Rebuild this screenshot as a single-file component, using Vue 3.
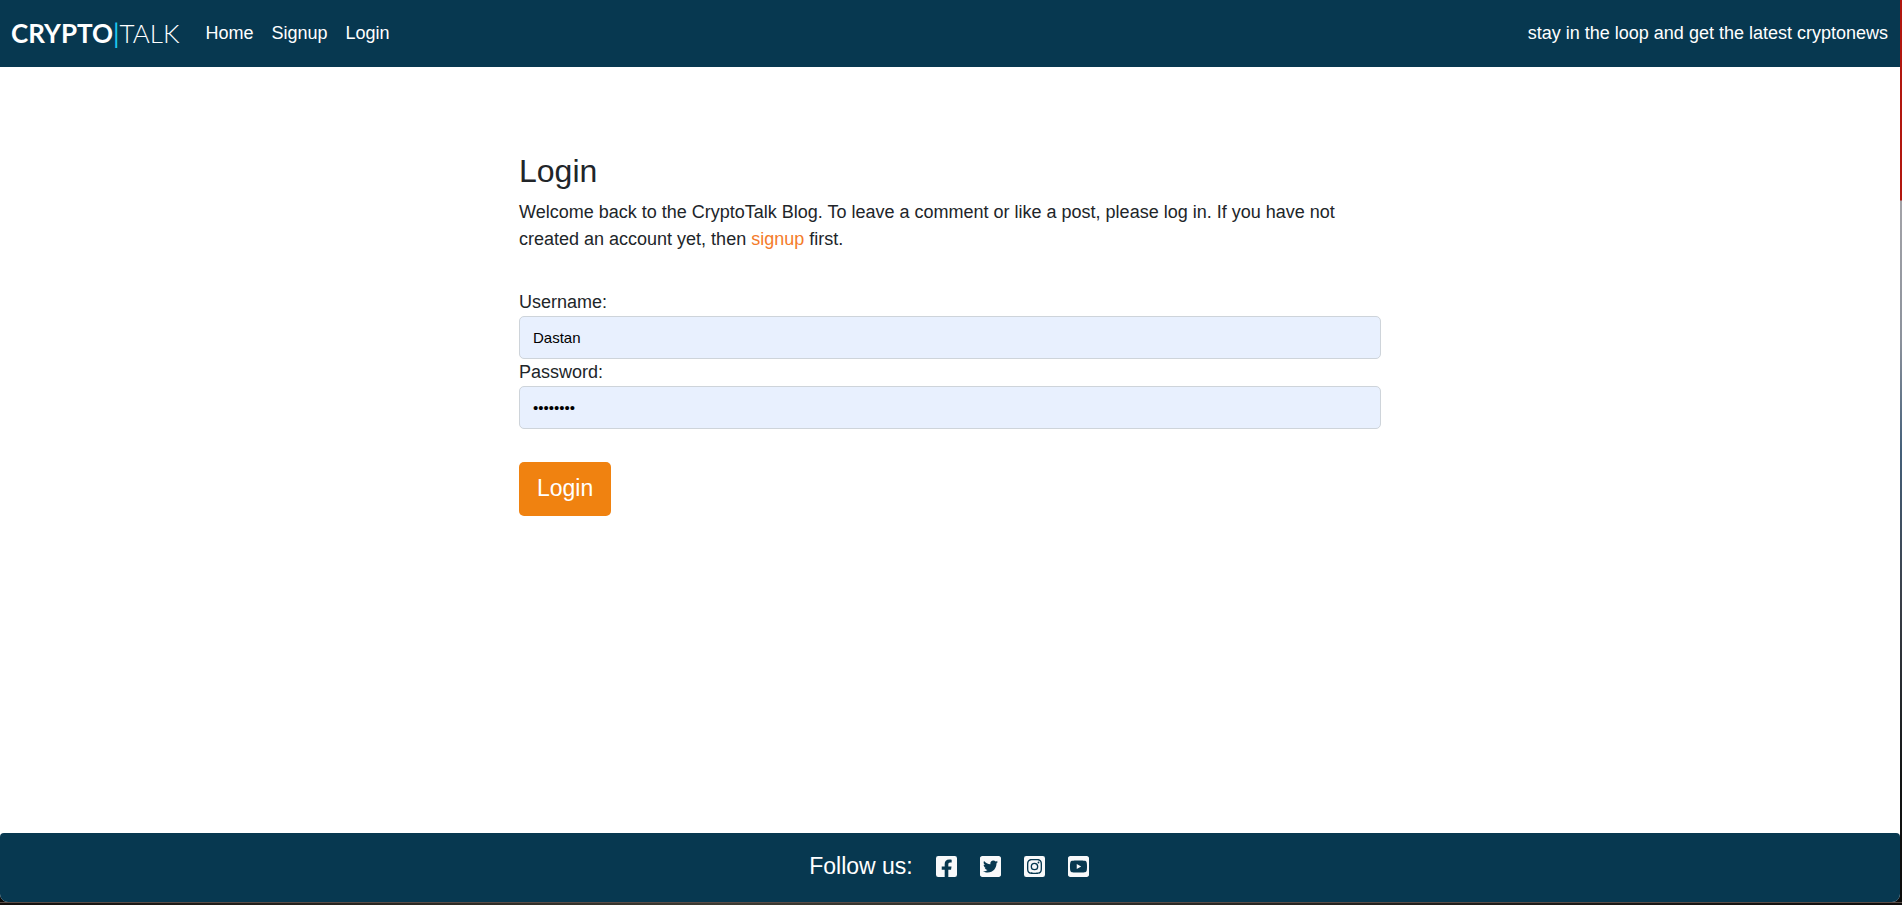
<script setup>
import { ref } from 'vue'

const username = ref('Dastan')
const password = ref('password')
const socials = [
  { name: 'Facebook', d: 'M400 32H48A48 48 0 0 0 0 80v352a48 48 0 0 0 48 48h137.25V327.69h-63V256h63v-54.64c0-62.15 37-96.48 93.67-96.48 27.14 0 55.52 4.84 55.52 4.84v61h-31.27c-30.81 0-40.42 19.12-40.42 38.73V256h68.78l-11 71.69h-57.78V480H400a48 48 0 0 0 48-48V80a48 48 0 0 0-48-48z' },
  { name: 'Twitter', d: 'M400 32H48C21.5 32 0 53.5 0 80v352c0 26.5 21.5 48 48 48h352c26.5 0 48-21.5 48-48V80c0-26.5-21.5-48-48-48zm-48.9 158.8c.2 2.8.2 5.7.2 8.5 0 86.7-66 186.6-186.6 186.6-37.2 0-71.7-10.8-100.7-29.4 5.3.6 10.4.8 15.8.8 30.7 0 58.9-10.4 81.4-28-28.8-.6-53-19.5-61.3-45.5 10.1 1.5 19.2 1.5 29.6-1.2-30-6.1-52.5-32.5-52.5-64.4v-.8c8.7 4.9 18.9 7.9 29.6 8.3a65.447 65.447 0 0 1-29.2-54.6c0-12.2 3.2-23.4 8.9-33.1 32.3 39.8 80.8 65.8 135.2 68.6-9.3-44.5 24-80.6 64-80.6 18.9 0 35.9 7.9 47.9 20.7 14.8-2.8 29-8.3 41.6-15.8-4.9 15.2-15.2 28-28.8 36.1 13.2-1.4 26-5.1 37.8-10.2-8.9 13.1-20.1 24.7-32.9 34z' },
  { name: 'Instagram', d: 'M224 202.66A53.34 53.34 0 1 0 277.36 256 53.38 53.38 0 0 0 224 202.66zm124.71-41a54 54 0 0 0-30.41-30.41c-21-8.29-71-6.43-94.3-6.43s-73.25-1.93-94.31 6.43a54 54 0 0 0-30.41 30.41c-8.28 21-6.43 71.05-6.43 94.33s-1.85 73.27 6.47 94.34a54 54 0 0 0 30.41 30.41c21 8.29 71 6.43 94.31 6.43s73.24 1.93 94.3-6.43a54 54 0 0 0 30.41-30.41c8.35-21 6.43-71.05 6.43-94.33s1.92-73.26-6.43-94.33zM224 338a82 82 0 1 1 82-82 81.9 81.9 0 0 1-82 82zm85.38-148.3a19.14 19.14 0 1 1 19.13-19.14 19.1 19.1 0 0 1-19.09 19.18zM400 32H48A48 48 0 0 0 0 80v352a48 48 0 0 0 48 48h352a48 48 0 0 0 48-48V80a48 48 0 0 0-48-48zm-17.12 290c-1.29 25.63-7.14 48.34-25.85 67s-41.4 24.63-67 25.85c-26.41 1.49-105.59 1.49-132 0-25.63-1.29-48.26-7.15-67-25.85s-24.63-41.42-25.85-67c-1.49-26.42-1.49-105.61 0-132 1.29-25.63 7.07-48.34 25.85-67s41.47-24.56 67-25.78c26.41-1.49 105.59-1.49 132 0 25.63 1.29 48.33 7.15 67 25.85s24.63 41.42 25.85 67.05c1.49 26.32 1.49 105.44 0 131.88z' },
  { name: 'YouTube', d: 'M186.8 202.1l95.2 54.1-95.2 54.1V202.1zM448 80v352c0 26.5-21.5 48-48 48H48c-26.5 0-48-21.5-48-48V80c0-26.5 21.5-48 48-48h352c26.5 0 48 21.5 48 48zm-42 176.300s0-59.600-7.600-88.200c-4.200-15.800-16.500-28.200-32.200-32.400C337.900 128 224 128 224 128s-113.900 0-142.200 7.700c-15.700 4.200-28 16.600-32.200 32.400-7.600 28.500-7.600 88.200-7.600 88.200s0 59.600 7.600 88.200c4.200 15.800 16.500 27.700 32.200 31.900C110.100 384 224 384 224 384s113.900 0 142.200-7.700c15.700-4.200 28-16.100 32.200-31.900 7.600-28.500 7.600-88.100 7.600-88.100z' }
]
</script>

<template>
  <div class="frame">
    <div class="page">
      <header class="header">
        <a class="logo" href="#"><b>CRYPTO</b><i>|</i>TALK</a>
        <nav class="nav">
          <a href="#">Home</a>
          <a href="#">Signup</a>
          <a href="#">Login</a>
        </nav>
        <span class="tagline">stay in the loop and get the latest cryptonews</span>
      </header>
      <main class="main">
        <h1>Login</h1>
        <p>Welcome back to the CryptoTalk Blog. To leave a comment or like a post, please log in. If you have not created an account yet, then <a href="#">signup</a> first.</p>
        <form @submit.prevent>
          <label for="username">Username:</label>
          <input id="username" v-model="username" type="text" autocomplete="username">
          <label for="password">Password:</label>
          <input id="password" v-model="password" type="password" autocomplete="current-password">
          <button type="submit">Login</button>
        </form>
      </main>
      <footer class="footer">
        <span>Follow us:</span>
        <a v-for="s in socials" :key="s.name" href="#" :aria-label="s.name">
          <svg viewBox="0 32 448 448" aria-hidden="true"><path :d="s.d" /></svg>
        </a>
      </footer>
    </div>
  </div>
</template>

<style>
body { margin: 0; }
</style>

<style scoped>
* { box-sizing: border-box; }
.frame {
  min-height: 100vh;
  display: flex;
  padding: 0 2px 3px 0;
  background:
    linear-gradient(#5a4c46 0, #5a4c46 1px, transparent 1px) 0 100% / 100% 3px no-repeat,
    linear-gradient(90deg, #14110f, #3c3b33 38%, #2c2b27 60%, #100e0d) 0 100% / 100% 3px no-repeat,
    linear-gradient(#b2170f 0, #b2170f 200px, #a3a3a8 201px, #8c929c 340px, #45607a 450px, #3a3f48 600px, #121414 780px, #0c0b0a 100%);
}
.page {
  flex: 1;
  display: flex;
  flex-direction: column;
  background: #fff;
  border-radius: 0 0 8px 8px;
  overflow: hidden;
  color: #212529;
  font: 18px/27px "Liberation Sans", Arial, sans-serif;
}
.header {
  display: flex;
  align-items: center;
  height: 67px;
  padding: 0 12px 0 11px;
  background: #073850;
}
a { text-decoration: none; }
.header a, .tagline { color: #fff; }
.logo {
  font-family: Lato, sans-serif;
  font-size: 26px;
  font-weight: 300;
}
.logo b { font-weight: 700; }
.logo i { font-style: normal; font-weight: 400; color: #1cc8f0; }
.nav {
  display: flex;
  flex: 1;
  gap: 18px;
  margin-left: 26px;
}
.main {
  flex: 1;
  width: 862px;
  max-width: 100%;
  margin: 0 auto;
  padding-top: 85px;
}
h1 {
  margin: 0 0 9px;
  font-size: 32px;
  line-height: 38px;
  font-weight: 400;
}
p { margin: 0 0 36px; }
p a { color: #f47b2a; }
form {
  display: flex;
  flex-direction: column;
}
input {
  width: 100%;
  height: 43px;
  padding: 0 13px;
  border: 1px solid #ced4da;
  border-radius: 5px;
  background: #e8f0fe;
  color: #000;
  font: 15px "Liberation Sans", Arial, sans-serif;
}
button {
  align-self: flex-start;
  margin-top: 33px;
  height: 54px;
  padding: 0 18px 2px;
  border: 0;
  border-radius: 5px;
  background: #f08210;
  color: #fff;
  font: 23px "Liberation Sans", Arial, sans-serif;
}
.footer {
  display: flex;
  justify-content: center;
  align-items: center;
  height: 69px;
  padding: 0 2px 2px 0;
  background: #073850;
  border-radius: 4px 4px 0 0;
  color: #fff;
  font-size: 23px;
}
.footer a { display: block; margin-left: 23px; }
svg { display: block; width: 21px; height: 21px; fill: #f8f9fa; }
</style>
